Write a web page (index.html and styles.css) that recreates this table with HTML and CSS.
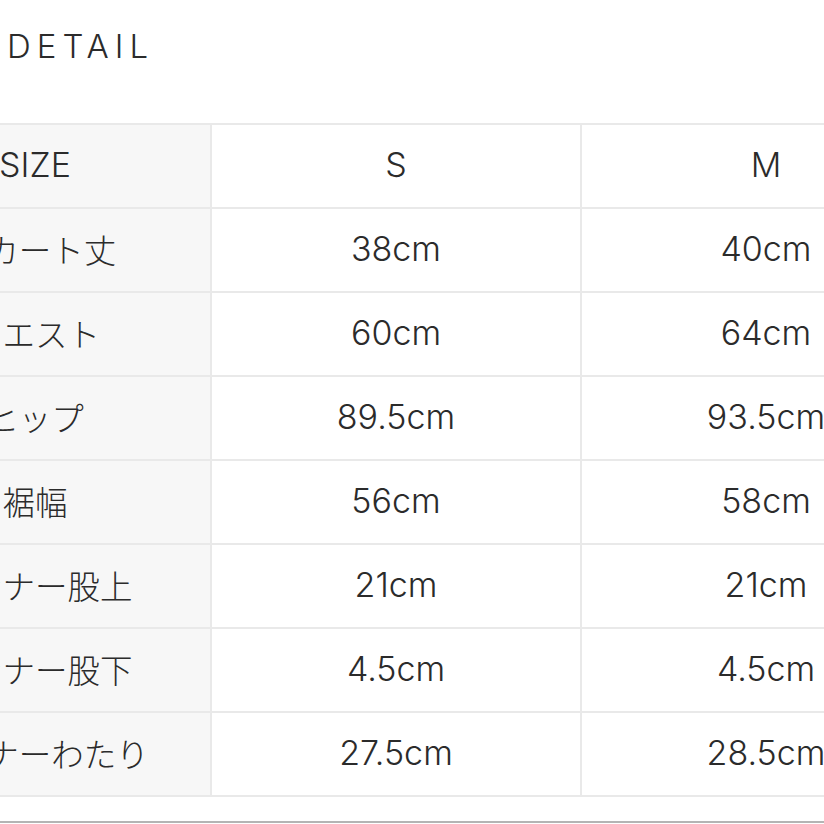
FILE: index.html
```html
<!DOCTYPE html>
<html lang="ja">
<head>
<meta charset="utf-8">
<link rel="stylesheet" href="styles.css">
</head>
<body>
<div class="page">
  <h2 class="title">DETAIL</h2>
  <div class="size-table">
    <div class="cell label">SIZE</div><div class="cell">S</div><div class="cell">M</div>
    <div class="cell label"><span class="ja">スカート丈</span></div><div class="cell">38cm</div><div class="cell">40cm</div>
    <div class="cell label"><span class="ja">ウエスト</span></div><div class="cell">60cm</div><div class="cell">64cm</div>
    <div class="cell label"><span class="ja">ヒップ</span></div><div class="cell">89.5cm</div><div class="cell">93.5cm</div>
    <div class="cell label"><span class="ja">裾幅</span></div><div class="cell">56cm</div><div class="cell">58cm</div>
    <div class="cell label"><span class="ja">インナー股上</span></div><div class="cell">21cm</div><div class="cell">21cm</div>
    <div class="cell label"><span class="ja">インナー股下</span></div><div class="cell">4.5cm</div><div class="cell">4.5cm</div>
    <div class="cell label"><span class="ja">インナーわたり</span></div><div class="cell">27.5cm</div><div class="cell">28.5cm</div>
  </div>
  <div class="bottom-rule"></div>
</div>
</body>
</html>
```
FILE: styles.css
```css
html, body {
  margin: 0;
  padding: 0;
  background: #ffffff;
}
body {
  width: 824px;
  height: 824px;
  overflow: hidden;
  font-family: "Inter", "Noto Sans CJK JP", sans-serif;
  color: #2b2b2b;
}
.page {
  position: relative;
  height: 824px;
}
.title {
  margin: 0;
  padding: 26px 0 0 7px;
  height: 123px;
  box-sizing: border-box;
  font-size: 33px;
  font-weight: 300;
  letter-spacing: 6px;
  line-height: 40px;
}
.size-table {
  display: grid;
  grid-template-columns: 352px 370px 370px;
  grid-auto-rows: 84px;
  margin-left: -140px;
  width: 1092px;
  border-top: 2px solid #e9e9e9;
}
.cell {
  display: flex;
  align-items: center;
  justify-content: center;
  padding-bottom: 3px;
  border-right: 2px solid #e9e9e9;
  border-bottom: 2px solid #e9e9e9;
  font-size: 34px;
  font-weight: 300;
  background: #ffffff;
}
.label {
  background: #f7f7f7;
}
.ja {
  font-size: 32.5px;
  font-weight: 300;
}
.bottom-rule {
  position: absolute;
  left: 0;
  right: 0;
  bottom: 1px;
  height: 2px;
  background: #b4b4b4;
}
```
